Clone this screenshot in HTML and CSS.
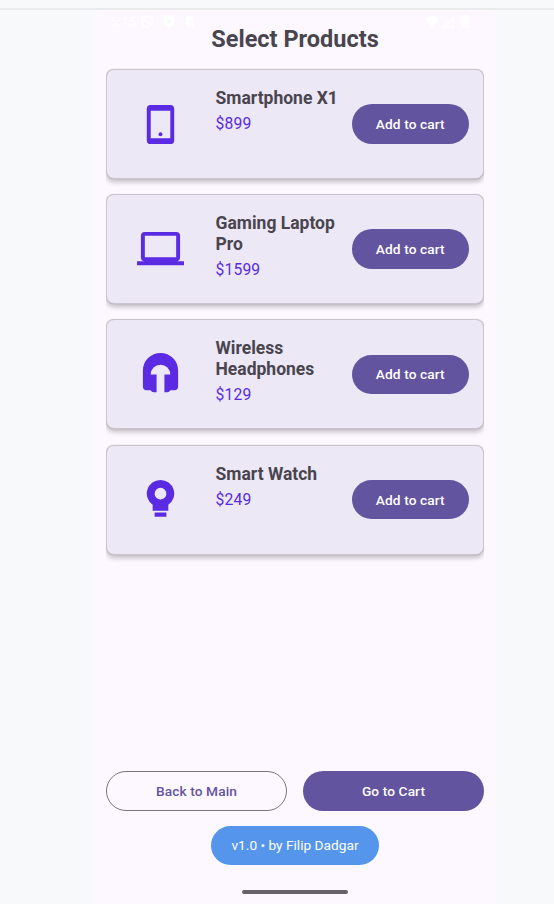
FILE: index.html
```
<!DOCTYPE html>
<html lang="en">
<head>
<meta charset="utf-8">
<title>Select Products</title>
<link rel="stylesheet" href="styles.css">
</head>
<body>
<main class="phone">
  <div class="status">
    <div class="status-group">
      <span class="clock">5:15</span>
      <svg width="12" height="13" viewBox="0 0 12 13"><path d="M6 1L11 2.8V6.5C11 9.5 8.7 11.5 6 12.3C3.3 11.5 1 9.5 1 6.5V2.8ZM2 3L10 10.5" fill="none" stroke="#fff" stroke-width="1.5"/></svg>
      <svg class="shield" width="12" height="13" viewBox="0 0 12 13"><path fill-rule="evenodd" d="M6 0L11.5 2V6.5C11.5 10 9 12 6 13C3 12 .5 10 .5 6.5V2ZM4.5 4V9L8.5 6.5Z" fill="#fff"/></svg>
      <svg width="10" height="11" viewBox="0 0 10 11"><path fill-rule="evenodd" d="M1 .5H9V10.500H1ZM4.500 2.500L2.500 8H3.500L5 4.500L6.500 8H7.500L5.500 2.500Z" fill="#fff"/></svg>
    </div>
    <div class="status-group status-right">
      <svg width="14" height="12" viewBox="0 0 14 12"><path d="M0 2.500Q7-2 14 2.500L7 12Z" fill="#fff"/></svg>
      <svg width="12" height="12" viewBox="0 0 12 12"><path d="M1.500 11.300L11.300 1.500V11.300ZM7.500 5V11" fill="none" stroke="#fff" stroke-width="1.300"/></svg>
      <svg class="battery" width="8" height="13" viewBox="0 0 8 13"><path d="M2.500 0H5.500V1H7.500V13H.5V1H2.500Z" fill="#fff"/></svg>
    </div>
  </div>
  <h1 class="title">Select Products</h1>
  <section class="products">
    <article class="card">
      <svg class="icon" viewBox="0 0 24 24"><path fill-rule="evenodd" d="M7 2H17A2 2 0 0 1 19 4V20A2 2 0 0 1 17 22H7A2 2 0 0 1 5 20V4A2 2 0 0 1 7 2ZM7 5V19H17V5Z"/><circle cx="12" cy="17" r="1"/></svg>
      <div class="info"><h2 class="name">Smartphone X1</h2><p class="price">$899</p></div>
      <button class="btn filled">Add to cart</button>
    </article>
    <article class="card">
      <svg class="icon" viewBox="0 0 24 24"><path fill-rule="evenodd" d="M20 18A2 2 0 0 0 22 16V5A2 2 0 0 0 20 3H4A2 2 0 0 0 2 5V16A2 2 0 0 0 4 18H0V20H24V18ZM4 5H20V16H4Z"/></svg>
      <div class="info"><h2 class="name">Gaming Laptop Pro</h2><p class="price">$1599</p></div>
      <button class="btn filled">Add to cart</button>
    </article>
    <article class="card">
      <svg class="icon" viewBox="0 0 24 24"><path d="M12 1A9 9 0 0 0 3 10V18A2 2 0 0 0 5 20H7Q7.500 21 8.500 21H10V12H7A5 5 0 0 1 17 12H14V21H15.500Q16.500 21 17 20H19A2 2 0 0 0 21 18V10A9 9 0 0 0 12 1Z"/></svg>
      <div class="info"><h2 class="name">Wireless Headphones</h2><p class="price">$129</p></div>
      <button class="btn filled">Add to cart</button>
    </article>
    <article class="card">
      <svg class="icon" viewBox="0 0 24 24"><path fill-rule="evenodd" d="M12 2A7 7 0 0 0 8 14.740V17.700H16V14.740A7 7 0 0 0 12 2ZM12 6A3 3 0 0 1 12 12A3 3 0 0 1 12 6ZM9 18.700H15V20.800H9Z"/></svg>
      <div class="info"><h2 class="name">Smart Watch</h2><p class="price">$249</p></div>
      <button class="btn filled">Add to cart</button>
    </article>
  </section>
  <footer class="footer">
    <div class="actions">
      <button class="btn outlined">Back to Main</button>
      <button class="btn filled">Go to Cart</button>
    </div>
    <div class="version">v1.0 • by Filip Dadgar</div>
    <div class="handle"></div>
  </footer>
</main>
</body>
</html>
```
FILE: styles.css
```
* { box-sizing: border-box; }
body {
  margin: 0;
  height: 904px;
  padding-top: 8px;
  background: #f7f9fb;
  font-family: Roboto, sans-serif;
  overflow: hidden;
}
body::before {
  content: "";
  display: block;
  height: 2px;
  background: #e9ebed;
}
h1, h2, p { margin: 0; }
.phone {
  width: 402px;
  height: 894px;
  margin-left: 94px;
  padding: 0 12px;
  background: #fdf8ff;
  display: flex;
  flex-direction: column;
}
.status {
  height: 14px;
  padding: 4px 15px 0 4px;
  display: flex;
  justify-content: space-between;
}
.status-group { display: flex; height: 15px; align-items: center; color: #fff; }
.clock { font-size: 13.5px; width: 31px; line-height: 15px; }
.shield { margin: 0 10px; }
.status-right { gap: 3px; }
.battery { margin-left: 4px; }
.title {
  color: #49454f;
  font-size: 23.5px;
  line-height: 30px;
  font-weight: 700;
  text-align: center;
}
.products {
  margin-top: 15px;
  display: flex;
  flex-direction: column;
  gap: 15.2px;
}
.card {
  height: 110px;
  display: grid;
  grid-template-columns: 47px 124px 117px;
  column-gap: 31px;
  padding: 0 14px 0 30px;
  border: 1.5px solid #c9c4d0;
  border-radius: 8px;
  background: #ece8f5;
  box-shadow: 0 3px 5px rgba(0, 0, 0, .24), 0 0 1px rgba(0, 0, 0, .2);
  clip-path: inset(-1px 0 -12px 0);
}
.icon { width: 47px; height: 47px; align-self: center; fill: #5a2be2; }
.info { padding: 18px 0 0 .5px; }
.name { color: #49454f; font-size: 17.5px; line-height: 20.5px; font-weight: 700; }
.price { margin-top: 4.5px; color: #5a2be2; font-size: 15.7px; line-height: 22px; letter-spacing: .15px; }
.btn {
  height: 39.5px;
  padding: 0;
  border: 0;
  border-radius: 20px;
  font: 500 13.7px/20px Roboto, sans-serif;
  letter-spacing: .1px;
}
.filled { background: #63549f; color: #fff; }
.outlined { background: transparent; color: #63549f; border: 1px solid #79747e; }
.card .btn { align-self: center; margin-left: -18px; width: 116.5px; }
.footer {
  margin-top: auto;
  height: 133px;
  display: flex;
  flex-direction: column;
  align-items: center;
}
.actions { width: 100%; display: grid; grid-template-columns: 1fr 1fr; gap: 16px; }
.version {
  width: 168px;
  height: 39px;
  margin-top: 15.5px;
  border-radius: 20px;
  background: #5596ec;
  color: #fff;
  font-size: 13.7px;
  line-height: 39px;
  text-align: center;
}
.handle { width: 106px; height: 4px; margin-top: 25px; border-radius: 2px; background: #67636a; }
```
